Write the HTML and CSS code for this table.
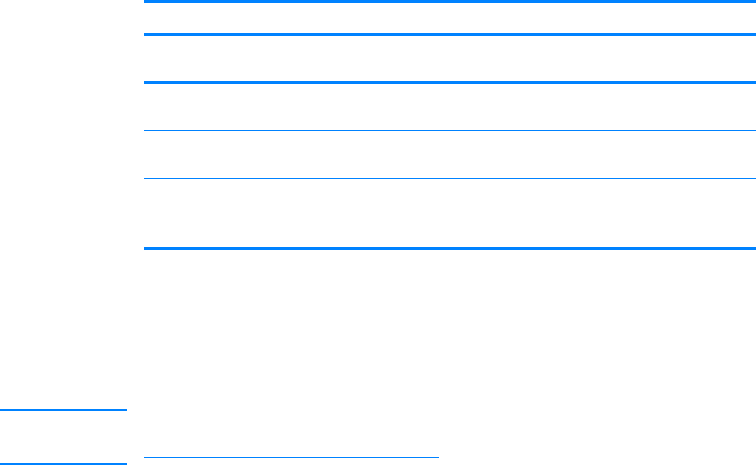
FILE: index.html
```html
<!DOCTYPE html>
<html lang="en">
<head>
  <meta charset="UTF-8" />
  <title>Table</title>
  <meta name="viewport" content="width=device-width, initial-scale=1.0"/>
  <link rel="stylesheet" href="styles.css">
</head>
<body>

  <div class="page">

    <!-- Side -->
    <aside class="side">
      <div class="side-box"></div>
    </aside>

    <!-- Main table -->
    <main class="main">
      <div class="table">
        <div class="row row-head"></div>
        <div class="row row-a"></div>
        <div class="row row-b"></div>
        <div class="row row-c"></div>
        <div class="row row-d"></div>
      </div>
      <a class="more" href="#"></a>
    </main>

  </div>

</body>
</html>
```

FILE: styles.css
```css
* { box-sizing: border-box; font-family: 'Liberation Sans', Arial, sans-serif; }
body { margin: 0; padding: 0; background: #ffffff; }

.page {
  display: grid;
  grid-template-columns: 127px 1fr;
  column-gap: 17px;
  height: 465px;
  overflow: hidden;
}

/* Side */
.side {
  display: flex;
  flex-direction: column;
  justify-content: flex-end;
}
.side-box {
  height: 56px;
  border-top: 2px solid #0082ff;
  border-bottom: 2px solid #0082ff;
}

/* Main */
.main {
  display: flex;
  flex-direction: column;
}
.table {
  border-top: 3px solid #0082ff;
}
.row { border-bottom: 1px solid #0082ff; }
.row-head { height: 33px; border-bottom-width: 3px; }
.row-a { height: 48px; border-bottom-width: 3px; }
.row-b { height: 47px; }
.row-c { height: 48px; }
.row-d { height: 71px; border-bottom-width: 3px; }

.more {
  display: block;
  width: 295px;
  height: 1px;
  margin-top: auto;
  margin-bottom: 7px;
  background: #0082ff;
}
```
